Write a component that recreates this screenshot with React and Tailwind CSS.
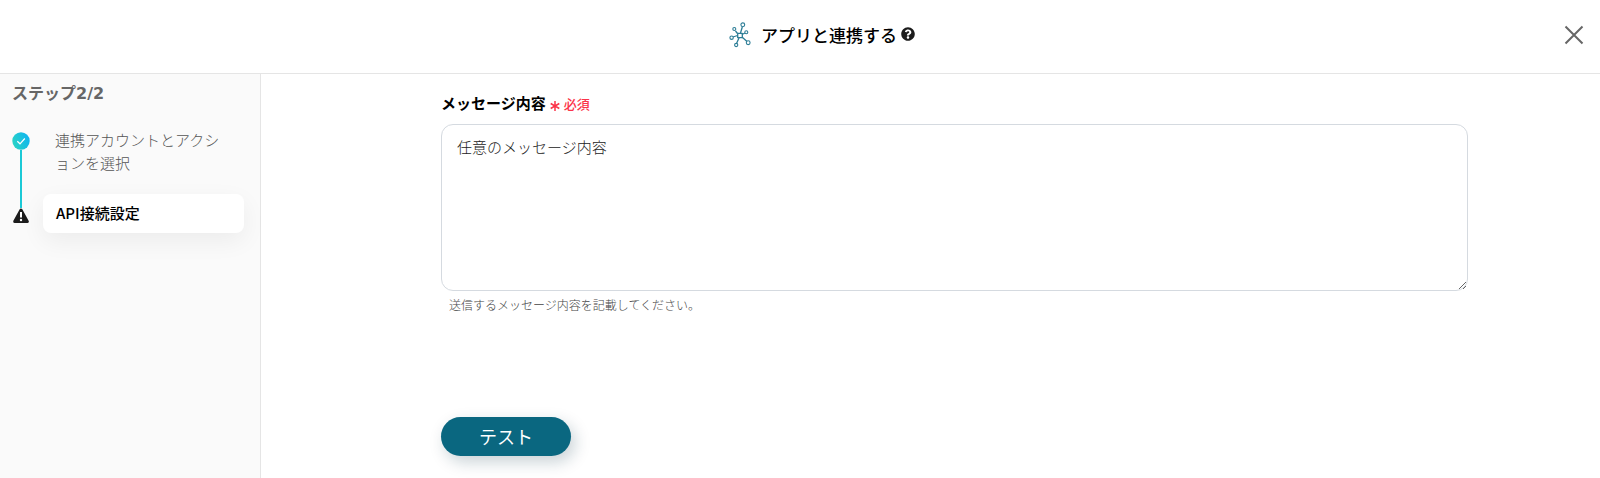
import React from 'react'
import { FaQuestionCircle } from 'react-icons/fa'

function NetworkIcon() {
    return (
        <svg width="22" height="26" viewBox="0 0 22 26" fill="none" stroke="#2c7d96" strokeWidth="1.1" aria-hidden="true">
            <path d="M11.500 11L13.300 5M13 12.500L16 11M8.500 11.500L6.500 9M8.500 13.500L4 15M10 16L7.500 21.500M13 15L18 19.500" strokeWidth="1.300" />
            <path d="M8.700 11.300H13.300V15.700H8.700Z" strokeWidth="1.300" strokeLinejoin="round" />
            <circle cx="13.800" cy="2.800" r="1.900" />
            <circle cx="5.300" cy="7" r="1.500" />
            <circle cx="17.300" cy="10.200" r="1.500" />
            <circle cx="2.600" cy="15.700" r="1.700" />
            <circle cx="7.200" cy="23" r="1.600" />
            <circle cx="19.200" cy="20.700" r="1.900" />
        </svg>
    )
}

function CheckIcon() {
    return (
        <svg width="18" height="18" viewBox="0 0 18 18" fill="none" aria-hidden="true">
            <defs>
                <linearGradient id="done" x1="0" y1="0.7" x2="1" y2="0.3">
                    <stop offset="0" stopColor="#2ad4c4" />
                    <stop offset="1" stopColor="#0fb4f0" />
                </linearGradient>
            </defs>
            <circle cx="9" cy="9" r="8.700" fill="url(#done)" />
            <path d="M5.300 9.200L8 11.800L12.800 6.500" stroke="#fff" strokeWidth="1.2" />
        </svg>
    )
}

function WarningIcon() {
    return (
        <svg width="18" height="16" viewBox="0 0 18 16" aria-hidden="true">
            <path d="M9 2L15.300 13.500H2.700Z" fill="#1c1c1c" stroke="#1c1c1c" strokeWidth="3" strokeLinejoin="round" />
            <path d="M9 4V9.500" stroke="#fff" strokeWidth="2" />
            <circle cx="9" cy="12" r="1.200" fill="#fff" />
        </svg>
    )
}

export default function App() {
    return (
        <div className="min-h-screen flex flex-col bg-white text-[#111] font-['Noto_Sans_CJK_JP',sans-serif]">
            <header className="grid grid-cols-[1fr_auto_1fr] items-center h-[74px] pb-1 border-b border-[#e5e5e5]">
                <div className="col-start-2 flex items-center ml-11">
                    <NetworkIcon />
                    <h1 className="ml-2.5 text-[17px] leading-6 font-medium text-black">アプリと連携する</h1>
                    <button type="button" aria-label="ヘルプ" className="ml-1 pb-0.5 text-[#1c1c1c]">
                        <FaQuestionCircle size={14} />
                    </button>
                </div>
                <button type="button" aria-label="閉じる" className="justify-self-end mr-4">
                    <svg width="20" height="20" viewBox="0 0 20 20" stroke="#666" strokeWidth="2" aria-hidden="true">
                        <path d="M1.500 1.500L18.500 18.500M18.500 1.500L1.500 18.500" />
                    </svg>
                </button>
            </header>

            <div className="flex flex-1">
                <aside className="w-[261px] shrink-0 bg-[#fafafa] border-r border-[#e5e5e5] pl-3 pr-4 pt-2">
                    <h2 className="text-[16px] leading-6 font-bold text-[#666] font-['DejaVu_Sans','Noto_Sans_CJK_JP',sans-serif]">ステップ2/2</h2>
                    <div className="flex mt-[22px] gap-3">
                        <div className="flex flex-col items-center w-[18px] pt-1">
                            <CheckIcon />
                            <div className="w-0.5 h-[58px] bg-[#1cc9d6]"></div>
                            <WarningIcon />
                        </div>
                        <ol className="flex-1 pl-px text-[15px] leading-[23px]">
                            <li className="px-3 font-light text-[#555]">連携アカウントとアクションを選択</li>
                            <li aria-current="step" className="mt-5 px-[13px] pt-[7px] pb-[9px] rounded-lg bg-white text-black font-medium shadow-[0_8px_24px_rgba(0,0,0,0.06)]">API接続設定</li>
                        </ol>
                    </div>
                </aside>

                <main className="flex-1 pl-[180px] pr-[132px] pt-[17px]">
                    <div className="flex items-center">
                        <label htmlFor="message" className="text-[15px] leading-6 font-bold text-black">メッセージ内容</label>
                        <span className="flex items-center ml-1 pt-0.5 text-[13px] leading-5 font-medium text-[#fb3449]">
                            <svg className="mr-1 mt-1" width="10" height="10" viewBox="0 0 10 10" stroke="currentColor" strokeWidth="1.500" aria-hidden="true">
                                <path d="M5 0V10M0.700 2.500L9.300 7.500M9.300 2.500L0.700 7.500" />
                            </svg>
                            必須
                        </span>
                    </div>
                    <textarea
                        id="message"
                        defaultValue="任意のメッセージ内容"
                        className="block w-full h-[167px] mt-[9px] px-[15px] py-[11px] border border-[#d5dae0] rounded-xl text-[15px] leading-[22px] font-light text-[#222] resize-y outline-none"
                    />
                    <p className="mt-1 px-2 text-[12px] leading-5 font-light text-[#444]">送信するメッセージ内容を記載してください。</p>
                    <button type="button" className="mt-[102px] px-[38px] pb-0.5 h-[39px] rounded-full bg-[#0a6780] text-[18px] leading-6 text-white shadow-[4px_6px_16px_rgba(10,50,70,0.22)]">テスト</button>
                </main>
            </div>
        </div>
    )
}
